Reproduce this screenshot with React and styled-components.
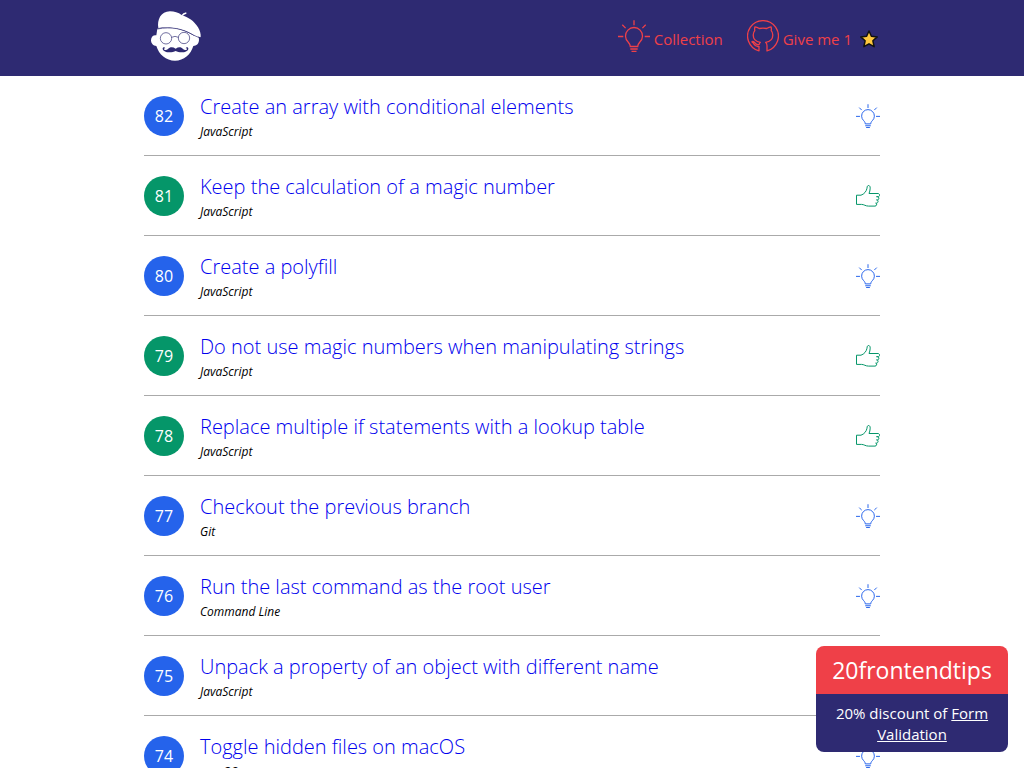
import React from "react";
import styled, { createGlobalStyle } from "styled-components";

const Global = createGlobalStyle`
  * { box-sizing: border-box; }
  body { margin: 0; background: #fff; color: #000; font: 15px/24px "Segoe UI", "Open Sans", "Noto Sans", sans-serif; }
`;

const Header = styled.header`
  background: #2e2a72;
`;

const Bar = styled.div`
  max-width: 736px;
  height: 76px;
  margin: 0 auto;
  display: flex;
  align-items: center;
  justify-content: space-between;
`;

const Home = styled.a`
  display: block;
  padding-left: 4px;
  svg { display: block; }
`;

const Nav = styled.nav`
  display: flex;
  gap: 24px;
  padding: 0 2px 4px 0;
`;

const NavLink = styled.a`
  display: flex;
  align-items: center;
  gap: 4px;
  color: #ef4048;
  text-decoration: none;
  svg { flex: none; }
`;

const NavText = styled.span`
  display: flex;
  align-items: center;
  gap: 8px;
  padding-top: 6px;
`;

const List = styled.ul`
  max-width: 736px;
  margin: 0 auto;
  padding: 0;
  list-style: none;
`;

const Row = styled.li`
  display: flex;
  align-items: center;
  gap: 16px;
  height: 80px;
  padding-top: 1px;
  border-bottom: 1px solid #aaa;
`;

const Badge = styled.span`
  flex: none;
  width: 40px;
  height: 40px;
  border-radius: 50%;
  background: ${(p) => (p.$green ? "#059669" : "#2563eb")};
  color: #fff;
  font-size: 16px;
  line-height: 40px;
  text-align: center;
`;

const Body = styled.div`
  flex: 1;
  display: flex;
  flex-direction: column;
  padding-top: 6px;
`;

const Title = styled.a`
  align-self: flex-start;
  color: #00e;
  font-size: 20px;
  font-weight: 300;
  line-height: 26px;
  text-decoration: none;
`;

const Category = styled.em`
  font-size: 12px;
  line-height: 24px;
`;

const Mark = styled.span`
  flex: none;
  color: ${(p) => (p.$green ? "#059669" : "#2563eb")};
  svg { display: block; }
`;

const Promo = styled.aside`
  position: fixed;
  right: 16px;
  bottom: 16px;
  width: 192px;
  border-radius: 8px;
  overflow: hidden;
  color: #fff;
  text-align: center;
`;

const Code = styled.div`
  background: #ef4048;
  font-size: 23px;
  line-height: 48px;
`;

const Offer = styled.p`
  margin: 0;
  padding: 9px 16px 7px;
  background: #2e2a72;
  line-height: 21px;
  a { color: #fff; }
`;

const Bulb = ({ size }) => (
  <svg width={size} height={size} viewBox="0 0 32 32" fill="none" stroke="currentColor" strokeWidth="1.300" aria-hidden="true">
    <path d="M16 .3v5M4.300 4.800l3.300 3.300M27.700 4.800l-3.300 3.300M0 16.500h5.300M26.700 16.500h5.300M12.300 26.500c0-2-.9-3-2-4.200a8.500 8.500 0 1 1 11.400 0c-1.100 1.200-2 2.200-2 4.200zM12.300 29h7.400M13.500 31.300h5" />
  </svg>
);

const Thumb = () => (
  <svg width="24" height="24" viewBox="0 0 24 24" fill="none" stroke="currentColor" strokeWidth="1" strokeLinejoin="round" aria-hidden="true">
    <path d="M.5 11.200h4.500c3.200-1 5.500-4 6-7 .1-1.800.6-2.700 1.500-2.700 1.200 0 1.700 1.100 1.700 2.700 0 2-.6 3.800-1.200 5.300h9c2 0 2.200 3.200 0 3.200h-1.500 1c1.800 0 1.800 3.200 0 3.200h-1 .3c1.700 0 1.700 3.200-.3 3.200h-.8c1.500 0 1.300 3-.7 3h-6.500c-3 0-4.500-1.700-7-1.700h-5z" />
  </svg>
);

const GitHub = () => (
  <svg width="32" height="32" viewBox="0 0 32 32" fill="none" stroke="currentColor" strokeWidth="1.300" strokeLinejoin="round" aria-hidden="true">
    <path d="M12 30.900v-4.500c-4 .7-4.800-2-5.500-3-.5-.8-1.700-1.100-1.500-1.700.5-.8 2.300.1 3.200 1.500.8 1.300 2 1.800 4 1.200.2-1 .6-1.700 1.200-2.100-4.800-.6-7.200-3.100-7.200-7.300 0-1.700.6-3.100 1.600-4.300-.3-1.200-.3-2.500.2-3.900 1.500 0 2.900.7 4.300 1.700 2.400-.6 5-.6 7.400 0 1.400-1 2.800-1.700 4.300-1.700.5 1.400.5 2.700.2 3.900 1 1.200 1.600 2.600 1.600 4.300 0 4.200-2.400 6.700-7.200 7.300.9.700 1.400 1.900 1.400 3.500v5.100a15.400 15.400 0 1 0-8 0z" />
  </svg>
);

const Star = () => (
  <svg width="18" height="18" viewBox="0 0 18 18" aria-hidden="true">
    <path d="M9 1l2.400 5.300 5.800.6-4.300 3.900 1.200 5.900L9 13.800l-5.100 2.900 1.200-5.900L.8 6.900l5.800-.6z" fill="#ffc83d" stroke="#111" strokeWidth="1.500" strokeLinejoin="round" />
  </svg>
);

const Logo = () => (
  <svg width="56" height="56" viewBox="24 30 168 168" aria-hidden="true">
    <g fill="#fff">
      <path d="M55 84C51 60 62 34 90 34c13 0 25 4 35 11 20 7 37 17 49 37 6 10 9 20 8 30l-17-4C130 86 95 80 55 84z" />
      <path d="M52 86C95 78 130 88 162 107c9-4 16 3 15 14-1 11-8 17-17 17-8 26-28 44-55 44s-48-18-56-44c-9 0-16-8-16-17 0-11 8-17 16-15z" />
    </g>
    <path d="M126 47q4-6 13-8" fill="none" stroke="#fff" strokeWidth="4" />
    <g fill="none" stroke="#2e2a72" strokeWidth="2">
      <path d="M52 87C95 79 128 86 160 105c8 4 14 7 23 9" />
      <circle cx="78" cy="115" r="17" />
      <circle cx="132" cy="114" r="17" />
      <path d="M95 112q10-6 20 0" />
    </g>
    <path d="M107 146c-9-6-18-5-23 1-5 5-12 3-12 0 0-2 2-3 4-2-2-5-9-3-8 2 2 11 27 13 39 6 12 7 36 5 38-6 1-5-6-7-8-2 2-1 4 0 4 2 0 3-7 5-12 0-5-6-13-7-22-1z" fill="#2e2a72" />
  </svg>
);

const tips = [
  [82, "Create an array with conditional elements", "JavaScript", false],
  [81, "Keep the calculation of a magic number", "JavaScript", true],
  [80, "Create a polyfill", "JavaScript", false],
  [79, "Do not use magic numbers when manipulating strings", "JavaScript", true],
  [78, "Replace multiple if statements with a lookup table", "JavaScript", true],
  [77, "Checkout the previous branch", "Git", false],
  [76, "Run the last command as the root user", "Command Line", false],
  [75, "Unpack a property of an object with different name", "JavaScript", false],
  [74, "Toggle hidden files on macOS", "macOS", false],
];

export default function App() {
  return (
    <>
      <Global />
      <Header>
        <Bar>
          <Home href="#" aria-label="Home"><Logo /></Home>
          <Nav>
            <NavLink href="#"><Bulb size={32} /><NavText>Collection</NavText></NavLink>
            <NavLink href="#"><GitHub /><NavText>Give me 1 <Star /></NavText></NavLink>
          </Nav>
        </Bar>
      </Header>
      <List>
        {tips.map(([n, title, category, green]) => (
          <Row key={n}>
            <Badge $green={green}>{n}</Badge>
            <Body>
              <Title href="#">{title}</Title>
              <Category>{category}</Category>
            </Body>
            <Mark $green={green}>{green ? <Thumb /> : <Bulb size={24} />}</Mark>
          </Row>
        ))}
      </List>
      <Promo>
        <Code>20frontendtips</Code>
        <Offer>20% discount of <a href="#">Form Validation</a></Offer>
      </Promo>
    </>
  );
}
